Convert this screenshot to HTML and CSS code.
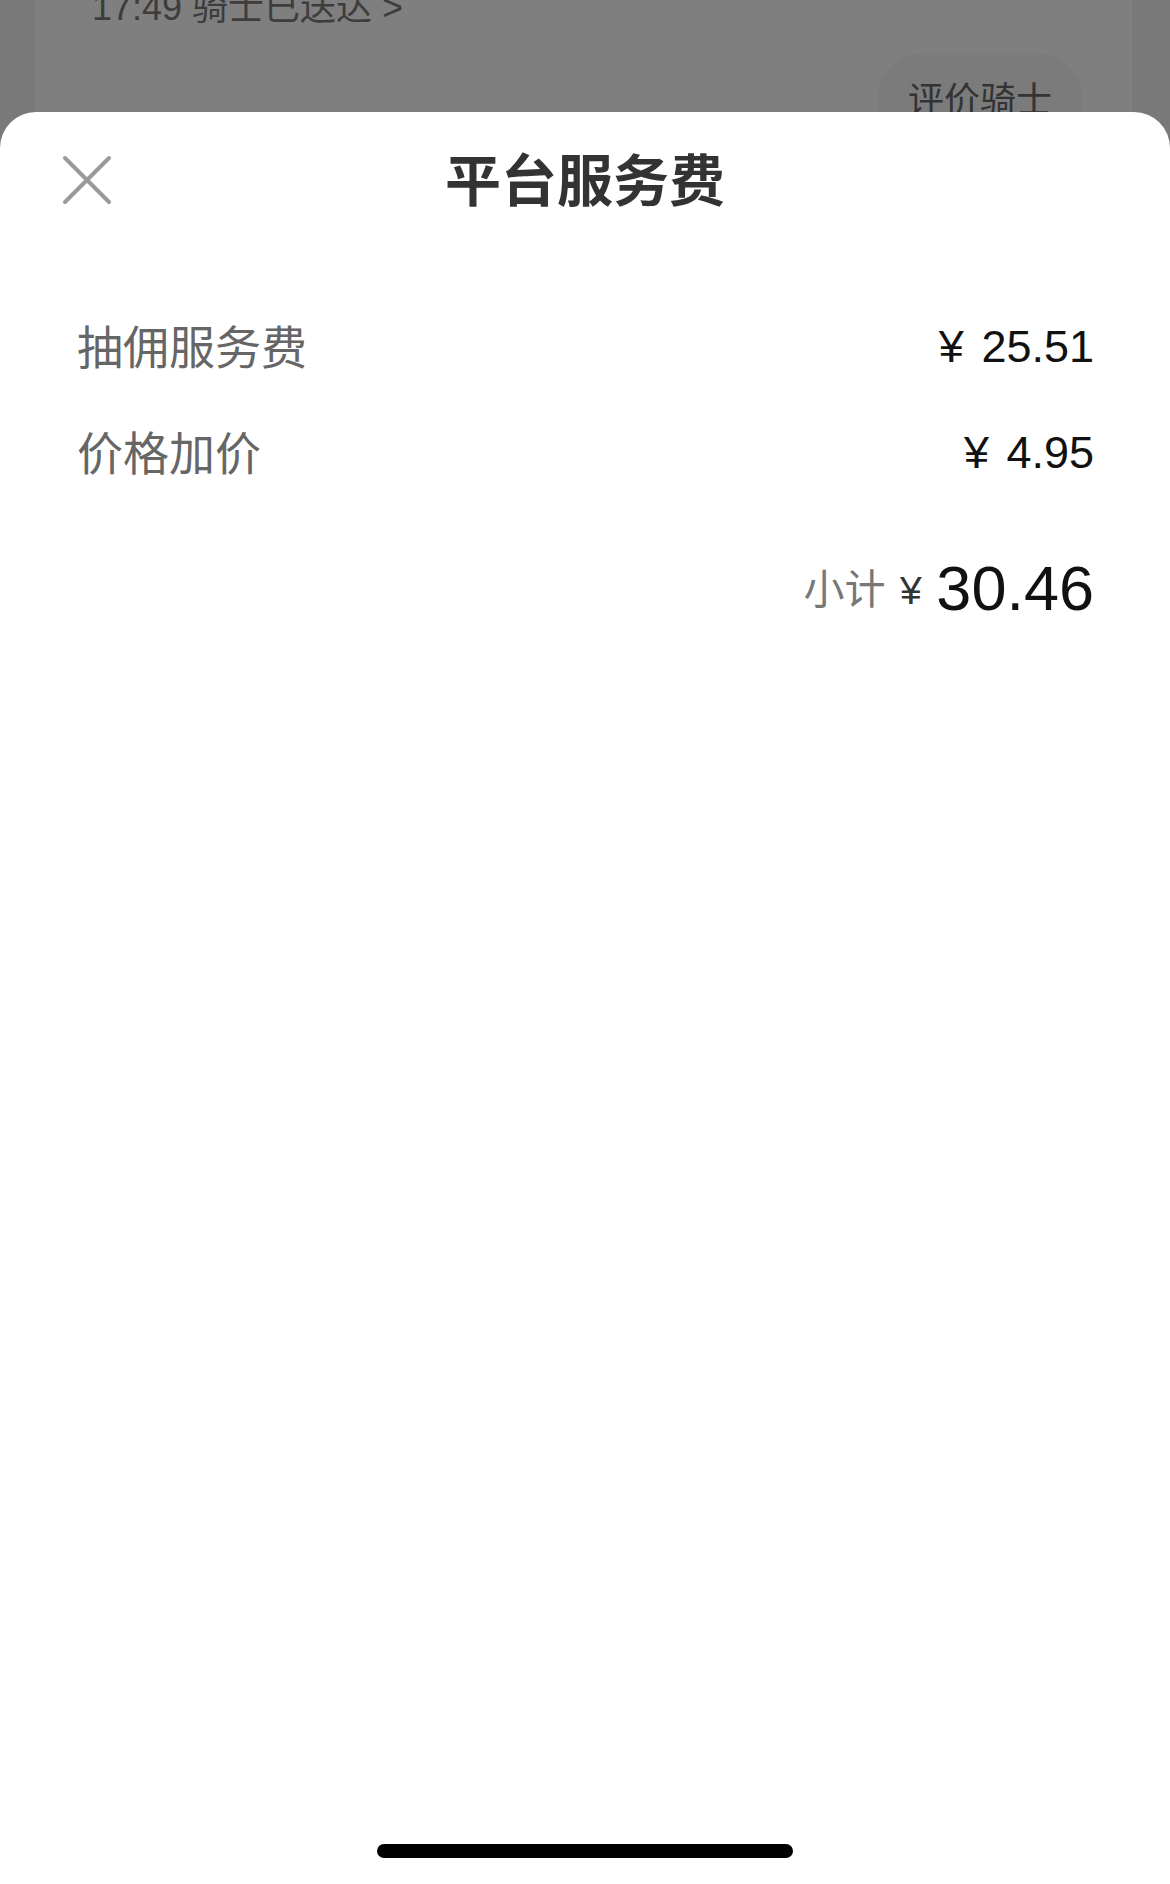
FILE: index.html
```html
<!DOCTYPE html>
<html lang="zh-CN">
<head>
    <meta charset="UTF-8">
    <title>平台服务费</title>
    <link rel="stylesheet" href="styles.css">
</head>
<body>
<div class="page">
    <div class="order-card">
        <p class="order-status">17:49 骑士已送达 &gt;</p>
        <div class="order-actions">
            <button class="pill">评价骑士</button>
        </div>
    </div>
</div>

<div class="mask"></div>

<div class="sheet">
    <div class="sheet-header">
        <button class="close" aria-label="关闭">
            <svg width="50" height="50" viewBox="0 0 50 50">
                <path d="M3 3 L47 47 M47 3 L3 47" stroke="#9a9a9a" stroke-width="4" stroke-linecap="round" fill="none"/>
            </svg>
        </button>
        <h1 class="sheet-title">平台服务费</h1>
        <span></span>
    </div>

    <div class="fee-list">
        <div class="fee-row">
            <span class="fee-name">抽佣服务费</span>
            <span class="fee-value">¥ 25.51</span>
        </div>
        <div class="fee-row">
            <span class="fee-name">价格加价</span>
            <span class="fee-value">¥ 4.95</span>
        </div>
        <div class="subtotal">
            <span class="subtotal-label">小计</span>
            <span class="subtotal-yen">¥</span>
            <span class="subtotal-num">30.46</span>
        </div>
    </div>

    <div class="home-bar"></div>
</div>
</body>
</html>
```

FILE: styles.css
```css
html, body {
    margin: 0;
    padding: 0;
}
body {
    width: 1170px;
    height: 1884px;
    background: #f3f3f3;
    font-family: "Noto Sans CJK SC", "Liberation Sans", sans-serif;
    overflow: hidden;
    position: relative;
}

/* page under the sheet */
.page {
    padding: 0 38px 0 35px;
}
.order-card {
    background: #fff;
    margin-top: -40px;
    height: 300px;
    padding: 0 50px 0 57px;
}
.order-status {
    margin: 0;
    padding-top: 30px;
    font-family: "Liberation Sans", "Noto Sans CJK SC", sans-serif;
    font-size: 36px;
    line-height: 36px;
    color: #7a7a7a;
}
.order-actions {
    display: flex;
    justify-content: flex-end;
    margin-top: 27px;
}
.pill {
    width: 204px;
    height: 92px;
    border: none;
    border-radius: 46px;
    background: #f7f7f7;
    font-family: "Noto Sans CJK SC", sans-serif;
    font-size: 36px;
    line-height: 1;
    color: #666;
    padding: 0 0 4px;
}

.mask {
    position: absolute;
    left: 0;
    top: 0;
    right: 0;
    bottom: 0;
    background: rgba(0, 0, 0, .5);
}

/* bottom sheet */
.sheet {
    position: absolute;
    left: 0;
    right: 0;
    top: 112px;
    bottom: 0;
    background: #fff;
    border-radius: 36px 36px 0 0;
}
.sheet-header {
    height: 130px;
    display: grid;
    grid-template-columns: 1fr auto 1fr;
    align-items: center;
}
.close {
    justify-self: start;
    margin-left: 62px;
    margin-top: 6px;
    width: 50px;
    height: 50px;
    padding: 0;
    border: none;
    background: none;
    cursor: pointer;
}
.close svg {
    display: block;
}
.sheet-title {
    margin: 0;
    font-size: 56px;
    line-height: 1;
    font-weight: 700;
    color: #333;
}

.fee-list {
    padding: 51px 76px 0 77px;
}
.fee-row {
    height: 106px;
    display: flex;
    align-items: center;
    justify-content: space-between;
}
.fee-name {
    font-size: 46px;
    line-height: 1;
    color: #666;
    margin-top: -4px;
}
.fee-value {
    font-family: "Liberation Sans", sans-serif;
    font-size: 45px;
    line-height: 1;
    word-spacing: 5px;
    color: #111;
}

.subtotal {
    margin-top: 41px;
    height: 80px;
    text-align: right;
    line-height: 80px;
}
.subtotal-label {
    font-size: 41px;
    color: #777;
    vertical-align: 6px;
}
.subtotal-yen {
    font-family: "Liberation Sans", sans-serif;
    font-size: 39px;
    color: #333;
    margin-left: 11px;
    vertical-align: 6px;
}
.subtotal-num {
    font-family: "Liberation Sans", sans-serif;
    font-size: 63px;
    color: #111;
    margin-left: 11px;
}

.home-bar {
    position: absolute;
    left: 377px;
    bottom: 26px;
    width: 416px;
    height: 14px;
    border-radius: 7px;
    background: #000;
}
```
